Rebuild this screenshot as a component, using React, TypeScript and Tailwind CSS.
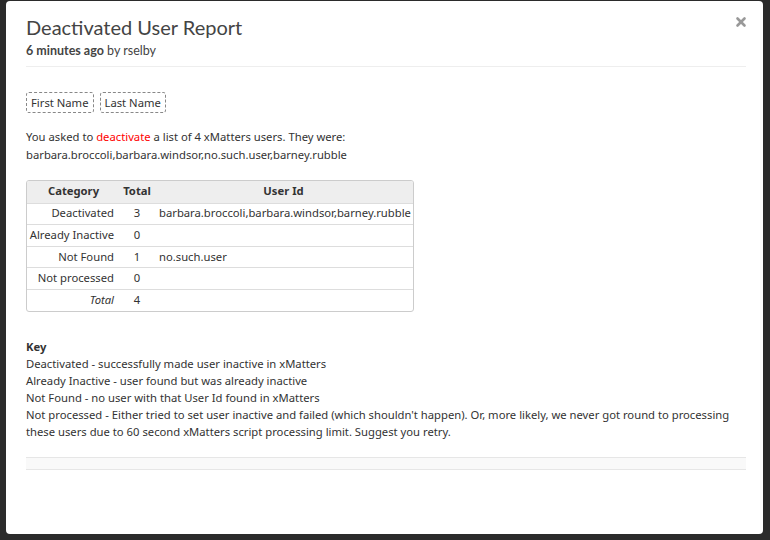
import { X } from "lucide-react";

const rows = [
  { category: "Deactivated", total: "3", users: "barbara.broccoli,barbara.windsor,barney.rubble" },
  { category: "Already Inactive", total: "0", users: "" },
  { category: "Not Found", total: "1", users: "no.such.user" },
  { category: "Not processed", total: "0", users: "" },
];

const keyLines = [
  "Deactivated - successfully made user inactive in xMatters",
  "Already Inactive - user found but was already inactive",
  "Not Found - no user with that User Id found in xMatters",
  "Not processed - Either tried to set user inactive and failed (which shouldn't happen). Or, more likely, we never got round to processing these users due to 60 second xMatters script processing limit. Suggest you retry.",
];

export default function App() {
  return (
    <div className="w-[770px] h-[540px] overflow-hidden bg-[#2b2b2b] pl-[6px] pt-[1px]">
      <div
        className="relative w-[757px] h-[533px] rounded-[4px] bg-white pl-[20px] pr-[17px] pt-[13px] text-[#333]"
        style={{ fontFamily: "'Noto Sans', 'DejaVu Sans', sans-serif" }}
      >
        <button className="absolute right-[15px] top-[14px] text-[#999]">
          <X className="h-[14px] w-[14px]" strokeWidth={4.5} />
        </button>

        {/* header */}
        <div className="border-b border-[#eee] pb-[7px]" style={{ fontFamily: "Lato, 'Open Sans', sans-serif" }}>
          <h1 className="text-[20px] leading-[26px] text-[#444]">Deactivated User Report</h1>
          <div className="mt-[3px] text-[12.5px] leading-[16px] text-[#444]">
            <span className="font-bold">6 minutes ago</span> by rselby
          </div>
        </div>

        {/* field chips */}
        <div className="mt-[25px] flex gap-[6px]">
          {["First Name", "Last Name"].map((f) => (
            <span
              key={f}
              className="rounded-[3px] border border-dashed border-[#888] px-[4px] text-[11.25px] leading-[19px]"
            >
              {f}
            </span>
          ))}
        </div>

        <p className="mt-[15px] text-[11.25px] leading-[18px]">
          You asked to <span className="text-[#f00]">deactivate</span> a list of 4 xMatters users. They were:
          <br />
          barbara.broccoli,barbara.windsor,no.such.user,barney.rubble
        </p>

        {/* results table */}
        <div className="mt-[16px] w-[388px] overflow-hidden rounded-[3px] border border-[#ccc]">
          <table className="w-full border-collapse whitespace-nowrap text-[11.25px]">
            <thead>
              <tr className="h-[22px] bg-[#eee]">
                <th className="w-[93px] font-bold">Category</th>
                <th className="w-[34px] font-bold">Total</th>
                <th className="font-bold">User Id</th>
              </tr>
            </thead>
            <tbody>
              {rows.map((r) => (
                <tr key={r.category} className="h-[21.6px] border-t border-[#ddd]">
                  <td className="pr-[6px] text-right">{r.category}</td>
                  <td className="text-center">{r.total}</td>
                  <td className="pl-[5px]">{r.users}</td>
                </tr>
              ))}
              <tr className="h-[21.6px] border-t border-[#ddd]">
                <td className="pr-[6px] text-right italic">Total</td>
                <td className="text-center">4</td>
                <td />
              </tr>
            </tbody>
          </table>
        </div>

        {/* key */}
        <div className="mt-[26px] text-[11.25px] leading-[17px]">
          <div className="font-bold">Key</div>
          {keyLines.map((l) => (
            <div key={l}>{l}</div>
          ))}
        </div>

        <div className="mt-[17px] h-[13px] border-y border-[#e6e6e6] bg-[#f9f9f9]" />
      </div>
    </div>
  );
}
